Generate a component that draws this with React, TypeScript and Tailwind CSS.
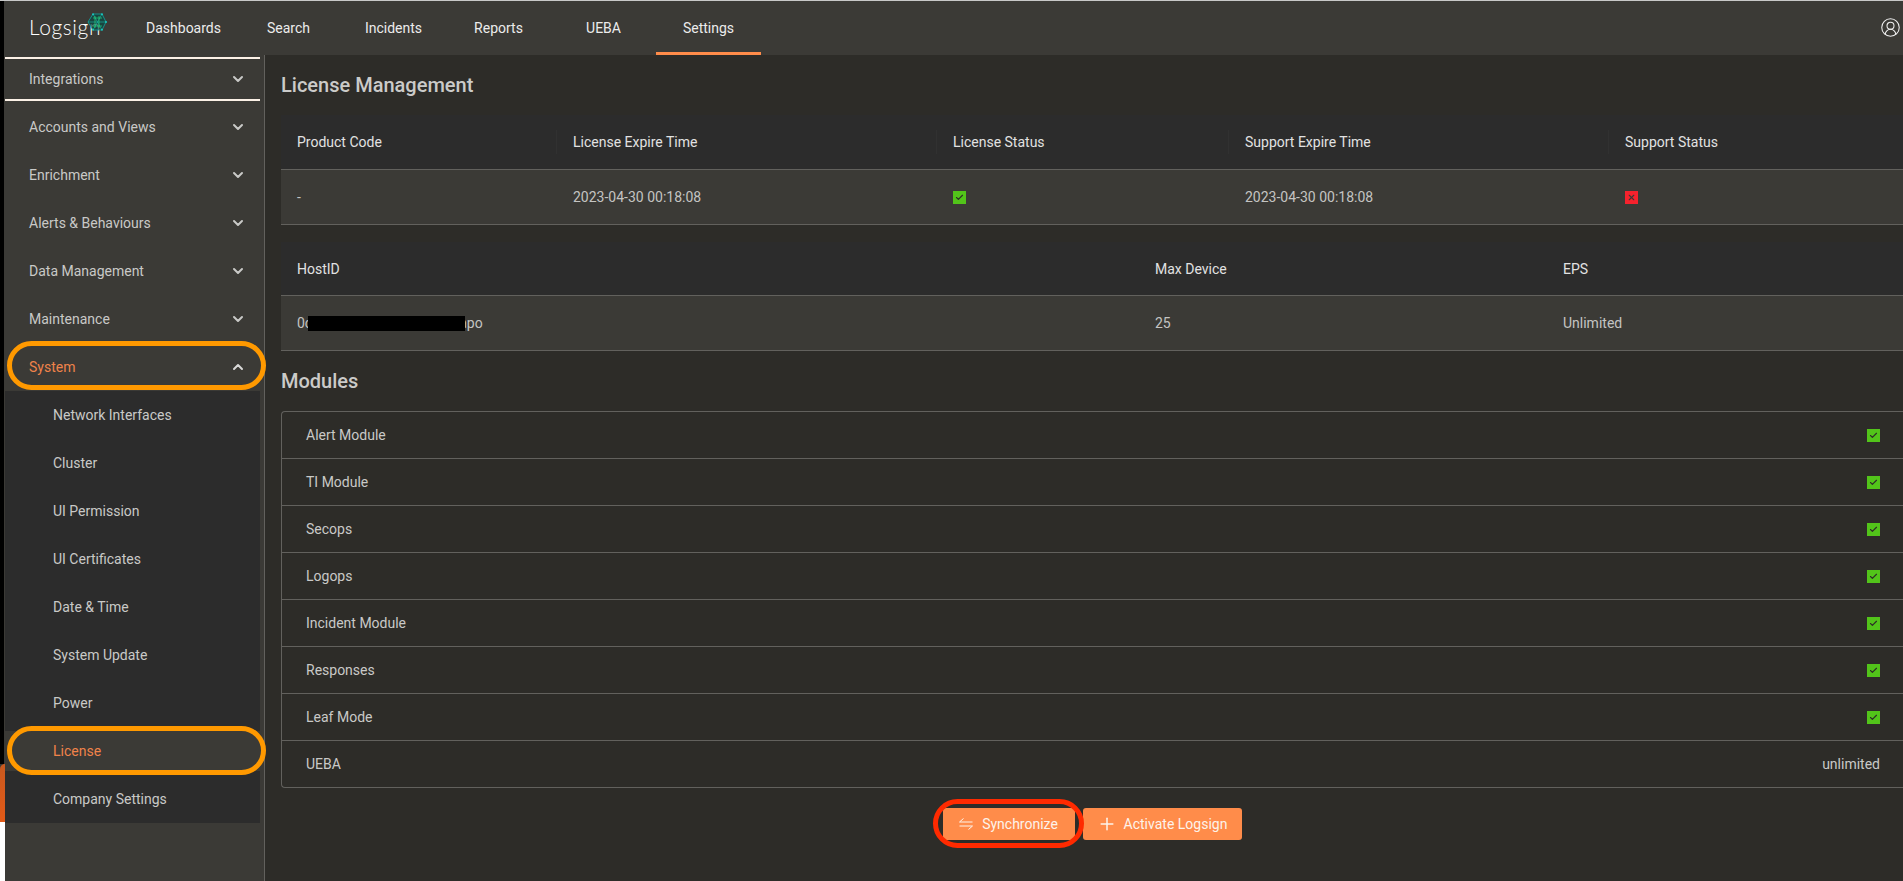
import { Check, ChevronDown, ChevronUp, CircleUserRound, Plus, X } from 'lucide-react';

const tabs = ['Dashboards', 'Search', 'Incidents', 'Reports', 'UEBA', 'Settings'];
const groups = ['Accounts and Views', 'Enrichment', 'Alerts & Behaviours', 'Data Management', 'Maintenance'];
const systemItems = ['Network Interfaces', 'Cluster', 'UI Permission', 'UI Certificates', 'Date & Time', 'System Update', 'Power', 'License', 'Company Settings'];
const modules = ['Alert Module', 'TI Module', 'Secops', 'Logops', 'Incident Module', 'Responses', 'Leaf Mode'];

const Ring = ({ className }: { className: string }) => (
  <span className={`pointer-events-none absolute z-20 rounded-[26px] border-[5px] ${className}`} />
);

const CheckBadge = () => (
  <span className="flex h-[13px] w-[13px] items-center justify-center bg-[#52c41a] text-[#2d2c28]">
    <Check size={9} strokeWidth={3} />
  </span>
);

const CrossBadge = () => (
  <span className="flex h-[13px] w-[13px] items-center justify-center bg-[#f5222d] text-[#3b3a36]">
    <X size={9} strokeWidth={3} />
  </span>
);

const Logo = () => (
  <div className="relative mt-[-4px] flex h-[26px] w-[77px] items-end">
    <span className="font-['Lato',sans-serif] text-[21px] leading-[24px] font-light tracking-[0.6px] text-white">Logsign</span>
    <svg viewBox="0 0 20 18" className="absolute top-0 left-[58px] h-[18px] w-[20px]" fill="none">
      <path d="M6 1 15 1 19 9 15 17 6 17 1 9Z" fill="#0c4a44" fillOpacity="0.7" stroke="#12a5a0" strokeWidth="0.8" />
      <path d="M1 9H19M6 1 15 17M15 1 6 17" stroke="#17b9a6" strokeWidth="0.6" />
      <path d="M6 5H15M6 13H15M8 3V15M12 3V15" stroke="#22d67e" strokeWidth="0.7" />
      <circle cx="6" cy="1.2" r="1" fill="#19c8c0" />
      <circle cx="15" cy="1.2" r="1" fill="#19c8c0" />
      <circle cx="19" cy="9" r="1" fill="#19c8c0" />
      <circle cx="15" cy="16.8" r="1" fill="#19c8c0" />
      <circle cx="6" cy="16.8" r="1" fill="#19c8c0" />
    </svg>
  </div>
);

const HeadCell = ({ label, sep = true }: { label: string; sep?: boolean }) => (
  <div className="flex items-center justify-between pl-4">
    <span>{label}</span>
    {sep && <span className="h-6 w-px bg-[#313131]" />}
  </div>
);

const SyncIcon = () => (
  <svg viewBox="0 0 14 12" className="h-3 w-[14px]" fill="none" stroke="currentColor" strokeWidth="1">
    <path d="M13.5 4H0.5L4.5 0.5" />
    <path d="M0.5 8H13.5L9.5 11.5" />
  </svg>
);

export default function App() {
  return (
    <div className="flex h-[881px] w-[1903px] flex-col overflow-hidden bg-[#2d2c28] font-['Roboto',sans-serif] text-sm text-[#c9c9c7]">
      <div className="h-px shrink-0 bg-[#c8c8c8]" />
      <div className="flex min-h-0 flex-1">
        <div className="flex w-[5px] shrink-0 flex-col bg-[#3b3a36]">
          <div className="h-[763px] w-[4px] bg-black" />
          <div className="h-[58px] rounded-tl-[5px] bg-gradient-to-b from-[#c9591f] to-[#e25a17]" />
          <div className="flex-1 bg-white" />
        </div>
        <div className="flex min-w-0 flex-1 flex-col">
          <header className="flex h-[54px] shrink-0 items-center bg-[#3b3a36] pr-[2px] text-[#ececec]">
            <div className="flex w-[126px] shrink-0 pl-6">
              <Logo />
            </div>
            {tabs.map((tab) => (
              <div
                key={tab}
                className={`flex h-full w-[105px] items-center justify-center border-b-[3px] pt-[3px] ${tab === 'Settings' ? 'border-[#ff8c4a]' : 'border-transparent'}`}>
                {tab}
              </div>
            ))}
            <CircleUserRound size={21} strokeWidth={1.2} className="mt-[-2px] ml-auto text-[#f0f0f0]" />
          </header>
          <div className="flex min-h-0 flex-1">
            <aside className="flex w-[260px] shrink-0 flex-col border-r border-[#62615d] bg-[#3b3a36]">
              <div className="w-[255px] pt-[2px]">
                <div className="flex h-[44px] items-center justify-between border-y-2 border-[#fbf0e6] pr-[14px] pl-6">
                  <span>Integrations</span>
                  <ChevronDown size={16} strokeWidth={3} />
                </div>
                <div className="mt-[2px]">
                  {groups.map((g) => (
                    <div key={g} className="flex h-12 items-center justify-between pr-[14px] pl-6">
                      <span>{g}</span>
                      <ChevronDown size={16} strokeWidth={3} />
                    </div>
                  ))}
                  <div className="relative flex h-12 items-center justify-between pr-[14px] pl-6 text-[#f0834a]">
                    <span>System</span>
                    <ChevronUp size={16} strokeWidth={3} className="text-[#d8d8d8]" />
                    <Ring className="top-[-2px] right-[-6px] bottom-[1px] left-[2px] border-[#ff9900]" />
                  </div>
                  <div className="bg-[#2c2c2c]">
                    {systemItems.map((item) => (
                      <div key={item} className="h-12 py-1">
                        <div className={`relative flex h-10 items-center pl-12 ${item === 'License' ? 'bg-[#3b3a36] text-[#f0834a]' : ''}`}>
                          {item}
                          {item === 'License' && <Ring className="top-[-5px] right-[-6px] bottom-[-4px] left-[2px] border-[#ff9900]" />}
                        </div>
                      </div>
                    ))}
                  </div>
                </div>
              </div>
            </aside>
            <main className="flex min-w-0 flex-1 flex-col pl-4">
              <h1 className="flex h-[60px] items-center text-xl font-medium text-[#cbcbc9]">License Management</h1>
              <section className="text-[#d0d0d0]">
                <div className="grid h-[55px] grid-cols-[276px_380px_292px_380px_1fr] border-b border-[#62615d] bg-[#2c2c2c] text-[#e2e2e2]">
                  <HeadCell label="Product Code" />
                  <HeadCell label="License Expire Time" />
                  <HeadCell label="License Status" />
                  <HeadCell label="Support Expire Time" />
                  <HeadCell label="Support Status" sep={false} />
                </div>
                <div className="grid h-[55px] grid-cols-[276px_380px_292px_380px_1fr] border-b border-[#62615d] bg-[#3b3a36] text-[#c4c4c2]">
                  <div className="flex items-center pl-4">-</div>
                  <div className="flex items-center pl-4">2023-04-30 00:18:08</div>
                  <div className="flex items-center pl-4"><CheckBadge /></div>
                  <div className="flex items-center pl-4">2023-04-30 00:18:08</div>
                  <div className="flex items-center pl-4"><CrossBadge /></div>
                </div>
              </section>
              <section className="mt-[17px]">
                <div className="grid h-[54px] grid-cols-[858px_408px_1fr] border-b border-[#62615d] bg-[#2c2c2c] text-[#e2e2e2]">
                  <HeadCell label="HostID" sep={false} />
                  <HeadCell label="Max Device" sep={false} />
                  <HeadCell label="EPS" sep={false} />
                </div>
                <div className="grid h-[55px] grid-cols-[858px_408px_1fr] border-b border-[#62615d] bg-[#3b3a36] text-[#c4c4c2]">
                  <div className="flex items-center pl-4">
                    <span>0c</span>
                    <span className="relative z-10 ml-[-4px] h-[15px] w-[157px] bg-black" />
                    <span className="ml-[-6px]">apo</span>
                  </div>
                  <div className="flex items-center pl-4">25</div>
                  <div className="flex items-center pl-4">Unlimited</div>
                </div>
              </section>
              <h2 className="flex h-[60px] items-center text-xl font-medium text-[#cbcbc9]">Modules</h2>
              <div className="rounded-l border border-r-0 border-[#62615d]">
                {modules.map((m) => (
                  <div key={m} className="flex h-[47px] items-center justify-between border-b border-[#62615d] pr-[23px] pl-6">
                    <span>{m}</span>
                    <CheckBadge />
                  </div>
                ))}
                <div className="flex h-[46px] items-center justify-between pr-[23px] pl-6">
                  <span>UEBA</span>
                  <span>unlimited</span>
                </div>
              </div>
              <div className="mt-[20px] flex justify-center gap-2">
                <button className="relative flex h-8 w-[132px] items-center justify-center gap-[9px] rounded-[3px] bg-[#ff8c4a] text-[#fdf3ea]">
                  <SyncIcon />
                  Synchronize
                  <Ring className="top-[-9px] right-[-9px] bottom-[-8px] left-[-10px] border-[#ff2a00]" />
                </button>
                <button className="flex h-8 w-[159px] items-center justify-center gap-[7px] rounded-[3px] bg-[#ff8c4a] text-[#fdf3ea]">
                  <Plus size={20} strokeWidth={1.8} />
                  Activate Logsign
                </button>
              </div>
            </main>
          </div>
        </div>
      </div>
    </div>
  );
}
